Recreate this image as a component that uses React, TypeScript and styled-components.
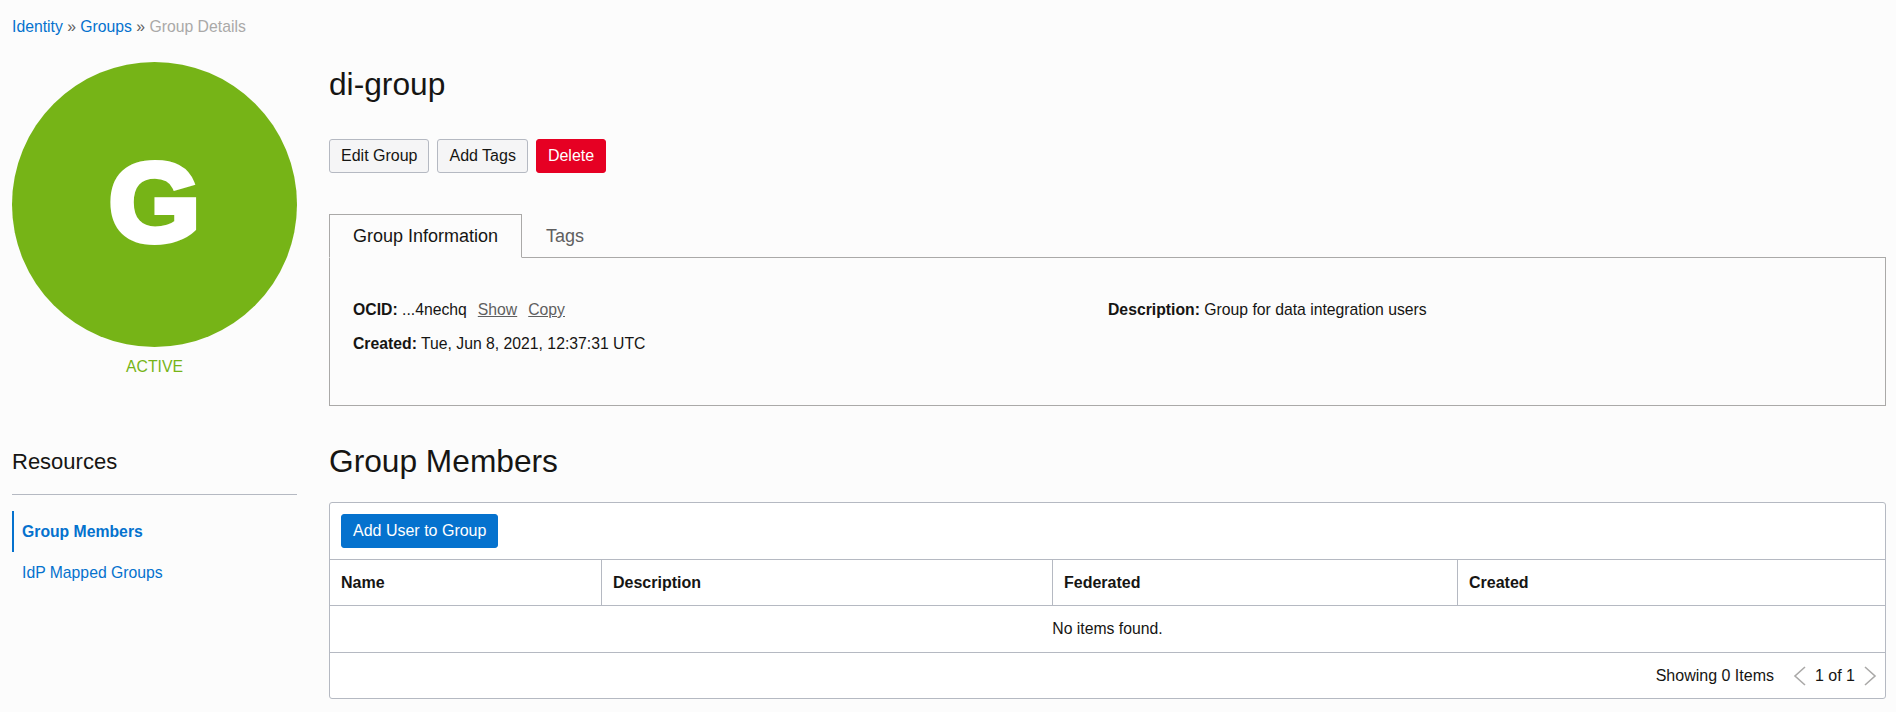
import React from 'react'
import styled, { createGlobalStyle } from 'styled-components'

const GlobalStyle = createGlobalStyle`
  html, body {
    margin: 0;
    padding: 0;
    background: #fcfcfc;
    color: #161513;
    font-family: "Liberation Sans", Arial, sans-serif;
    font-size: 15.75px;
  }
`

const Page = styled.div`
  width: 1896px;
  height: 712px;
  box-sizing: border-box;
  padding: 19px 10px 0 12px;
  overflow: hidden;
`

const Breadcrumbs = styled.div`
  height: 16px;
  line-height: 16px;
  color: #5f5f5f;
  margin-bottom: 27px;
`

const CrumbLink = styled.a`
  color: #0572ce;
`

const CrumbCurrent = styled.span`
  color: #aaa9a8;
`

const TopRow = styled.div`
  display: grid;
  grid-template-columns: 285px 1fr;
  column-gap: 32px;
`

const Avatar = styled.div`
  width: 285px;
  height: 285px;
  box-sizing: border-box;
  padding-bottom: 4px;
  border-radius: 50%;
  background: #76b417;
  display: flex;
  align-items: center;
  justify-content: center;
`

const AvatarLetter = styled.span`
  color: #fff;
  font-size: 112px;
  font-weight: 700;
  -webkit-text-stroke: 6px #fff;
  transform: scaleX(1.05);
`

const Status = styled.div`
  text-align: center;
  color: #76b417;
  line-height: 18px;
  margin-top: 11px;
`

const Title = styled.h1`
  margin: 0;
  font-size: 31.7px;
  font-weight: 400;
  line-height: 44px;
  height: 44px;
`

const Actions = styled.div`
  display: flex;
  gap: 8px;
  margin-top: 33px;
`

const Button = styled.button<{ $kind?: 'default' | 'danger' | 'primary' }>`
  height: 34px;
  box-sizing: border-box;
  padding: 0 11px;
  border-radius: 3px;
  font: 16px/32px "Liberation Sans", Arial, sans-serif;
  border: 1px solid
    ${({ $kind }) => ($kind === 'danger' ? '#e60023' : $kind === 'primary' ? '#0572ce' : '#b5b9c2')};
  background: ${({ $kind }) => ($kind === 'danger' ? '#e60023' : $kind === 'primary' ? '#0572ce' : '#f5f5f6')};
  color: ${({ $kind }) => ($kind === 'danger' || $kind === 'primary' ? '#fff' : '#161513')};
`

const Tabs = styled.div`
  display: flex;
  margin-top: 41px;
  height: 44px;
  box-sizing: border-box;
  border-bottom: 1px solid #aaa9a8;
`

const Tab = styled.div<{ $active?: boolean }>`
  box-sizing: border-box;
  height: 44px;
  line-height: 42px;
  font-size: 18px;
  padding: 0 23px;
  color: ${({ $active }) => ($active ? '#161513' : '#5f5f5f')};
  border: 1px solid ${({ $active }) => ($active ? '#aaa9a8' : 'transparent')};
  border-bottom: ${({ $active }) => ($active ? '1px solid #fcfcfc' : 'none')};
`

const InfoPanel = styled.div`
  box-sizing: border-box;
  height: 148px;
  padding: 42px 23px 0;
  border: 1px solid #aaa9a8;
  border-top: none;
  display: grid;
  grid-template-columns: 755px 1fr;
`

const InfoLine = styled.div`
  line-height: 20px;
  margin-bottom: 14px;
`

const Label = styled.b`
  font-weight: 700;
`

const InfoAction = styled.a`
  color: #5f5f5f;
  text-decoration: underline;
  margin-left: 11px;
`

const BottomRow = styled.div`
  display: grid;
  grid-template-columns: 285px 1fr;
  column-gap: 32px;
  margin-top: 34px;
`

const ResourcesTitle = styled.h3`
  margin: 0;
  font-size: 22px;
  font-weight: 400;
  line-height: 44px;
  height: 54px;
  border-bottom: 1px solid #b5b9c2;
`

const NavList = styled.ul`
  list-style: none;
  margin: 16px 0 0;
  padding: 0;
`

const NavItem = styled.li<{ $active?: boolean }>`
  height: 41px;
  line-height: 41px;
  padding-left: ${({ $active }) => ($active ? '8px' : '10px')};
  border-left: ${({ $active }) => ($active ? '2px solid #0572ce' : 'none')};
  color: #0572ce;
  font-weight: ${({ $active }) => ($active ? 700 : 400)};
`

const SectionTitle = styled.h2`
  margin: 0;
  font-size: 31.7px;
  font-weight: 400;
  line-height: 42px;
  height: 42px;
`

const TableCard = styled.div`
  margin-top: 20px;
  background: #fff;
  border: 1px solid #b5b9c2;
  border-radius: 3px;
  height: 197px;
  box-sizing: border-box;
`

const TableToolbar = styled.div`
  height: 57px;
  box-sizing: border-box;
  padding: 11px 11px 0;
  border-bottom: 1px solid #b5b9c2;
`

const HeaderRow = styled.div`
  display: grid;
  grid-template-columns: 271px 451px 405px 1fr;
  height: 46px;
  box-sizing: border-box;
  border-bottom: 1px solid #b5b9c2;
`

const HeaderCell = styled.div`
  font-size: 16px;
  font-weight: 700;
  line-height: 45px;
  padding-left: 11px;
  & + & {
    border-left: 1px solid #b5b9c2;
  }
`

const EmptyRow = styled.div`
  height: 47px;
  line-height: 46px;
  box-sizing: border-box;
  text-align: center;
  border-bottom: 1px solid #b5b9c2;
`

const Footer = styled.div`
  display: flex;
  align-items: center;
  justify-content: flex-end;
  height: 45px;
  padding-right: 8px;
  font-size: 16px;
`

const Pager = styled.div`
  display: flex;
  align-items: center;
  gap: 8px;
  margin-left: 19px;
`

const Chevron = ({ flip }: { flip?: boolean }) => (
  <svg width="14" height="20" viewBox="0 0 14 20" fill="none">
    <path
      d={flip ? 'M2 1l10 9-10 9' : 'M12 1L2 10l10 9'}
      stroke="#aaa9a8"
      strokeWidth="1.6"
    />
  </svg>
)

const columns = ['Name', 'Description', 'Federated', 'Created']

const App = () => (
  <Page>
    <GlobalStyle />
    <Breadcrumbs>
      <CrumbLink>Identity</CrumbLink> » <CrumbLink>Groups</CrumbLink> » <CrumbCurrent>Group Details</CrumbCurrent>
    </Breadcrumbs>
    <TopRow>
      <div>
        <Avatar>
          <AvatarLetter>G</AvatarLetter>
        </Avatar>
        <Status>ACTIVE</Status>
      </div>
      <div>
        <Title>di-group</Title>
        <Actions>
          <Button>Edit Group</Button>
          <Button>Add Tags</Button>
          <Button $kind="danger">Delete</Button>
        </Actions>
        <Tabs>
          <Tab $active>Group Information</Tab>
          <Tab>Tags</Tab>
        </Tabs>
        <InfoPanel>
          <div>
            <InfoLine>
              <Label>OCID:</Label> ...4nechq
              <InfoAction>Show</InfoAction>
              <InfoAction>Copy</InfoAction>
            </InfoLine>
            <InfoLine>
              <Label>Created:</Label> Tue, Jun 8, 2021, 12:37:31 UTC
            </InfoLine>
          </div>
          <div>
            <InfoLine>
              <Label>Description:</Label> Group for data integration users
            </InfoLine>
          </div>
        </InfoPanel>
      </div>
    </TopRow>
    <BottomRow>
      <div>
        <ResourcesTitle>Resources</ResourcesTitle>
        <NavList>
          <NavItem $active>Group Members</NavItem>
          <NavItem>IdP Mapped Groups</NavItem>
        </NavList>
      </div>
      <div>
        <SectionTitle>Group Members</SectionTitle>
        <TableCard>
          <TableToolbar>
            <Button $kind="primary">Add User to Group</Button>
          </TableToolbar>
          <HeaderRow>
            {columns.map((c) => (
              <HeaderCell key={c}>{c}</HeaderCell>
            ))}
          </HeaderRow>
          <EmptyRow>No items found.</EmptyRow>
          <Footer>
            Showing 0 Items
            <Pager>
              <Chevron />
              1 of 1
              <Chevron flip />
            </Pager>
          </Footer>
        </TableCard>
      </div>
    </BottomRow>
  </Page>
)

export default App
